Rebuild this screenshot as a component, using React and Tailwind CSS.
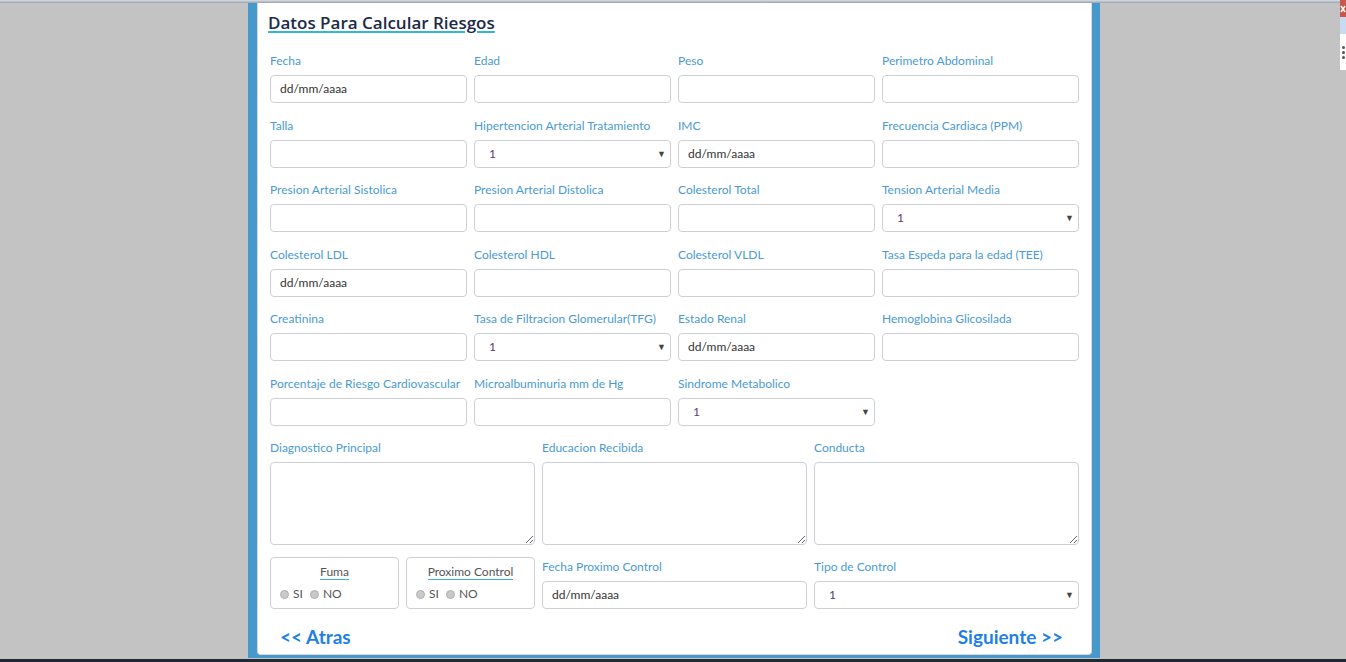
import React from 'react';

const font = { fontFamily: '"Lato", "Liberation Sans", sans-serif' };

// filas del formulario de riesgos
const rows = [
  [
    { label: 'Fecha', type: 'date' },
    { label: 'Edad' },
    { label: 'Peso' },
    { label: 'Perimetro Abdominal' },
  ],
  [
    { label: 'Talla' },
    { label: 'Hipertencion Arterial Tratamiento', type: 'select' },
    { label: 'IMC', type: 'date' },
    { label: 'Frecuencia Cardiaca (PPM)' },
  ],
  [
    { label: 'Presion Arterial Sistolica' },
    { label: 'Presion Arterial Distolica' },
    { label: 'Colesterol Total' },
    { label: 'Tension Arterial Media', type: 'select' },
  ],
  [
    { label: 'Colesterol LDL', type: 'date' },
    { label: 'Colesterol HDL' },
    { label: 'Colesterol VLDL' },
    { label: 'Tasa Espeda para la edad (TEE)' },
  ],
  [
    { label: 'Creatinina' },
    { label: 'Tasa de Filtracion Glomerular(TFG)', type: 'select' },
    { label: 'Estado Renal', type: 'date' },
    { label: 'Hemoglobina Glicosilada' },
  ],
  [
    { label: 'Porcentaje de Riesgo Cardiovascular' },
    { label: 'Microalbuminuria mm de Hg' },
    { label: 'Sindrome Metabolico', type: 'select' },
    null,
  ],
];

function Box({ type }) {
  if (type === 'select') {
    return (
      <div className="h-[28px] border border-[#ccd0d4] rounded-[4px] bg-white flex items-center justify-between pl-[14px] pr-[4px]">
        <span className="text-[12px] text-[#5a3d7a]">1</span>
        <span className="text-[9px] text-[#444]">▼</span>
      </div>
    );
  }
  return (
    <div className="h-[28px] border border-[#ccd0d4] rounded-[4px] bg-white flex items-center pl-[9px]">
      {type === 'date' && <span className="text-[12px] text-[#333]">dd/mm/aaaa</span>}
    </div>
  );
}

function Field({ f }) {
  if (!f) return <div />;
  return (
    <div className="flex flex-col">
      <label className="text-[12px] leading-[15px] h-[15px] mb-[7px] text-[#4a9ad4] whitespace-nowrap">{f.label}</label>
      <Box type={f.type} />
    </div>
  );
}

function Radio({ text }) {
  return (
    <span className="flex items-center gap-[4px] text-[12px] text-[#555]">
      <span className="w-[9px] h-[9px] rounded-full bg-[#c9c9c9] border border-[#b0b0b0]" />
      {text}
    </span>
  );
}

function ChoiceBox({ title }) {
  return (
    <div className="h-[52px] border border-[#ccd0d4] rounded-[4px] flex flex-col items-center pt-[6px]">
      <span className="text-[12px] leading-[15px] text-[#555] border-b border-[#3bb3cf]">{title}</span>
      <div className="self-start flex gap-[7px] pl-[9px] mt-[5px]">
        <Radio text="SI" />
        <Radio text="NO" />
      </div>
    </div>
  );
}

export default function App() {
  return (
    <div className="relative w-full h-[662px] bg-[#c3c3c3] overflow-hidden flex flex-col" style={font}>
      <div className="h-[3px] bg-gradient-to-b from-[#d8dee6] to-[#9aa3ad]" />
      <div className="flex-1 flex">
        <div className="w-[248px]" />
        <div className="w-[852px] h-[655px] bg-[#4799cb] pl-[9px] pr-[8px] pb-[3px]">
          <div className="h-full bg-white border border-[#d5d9dd] border-t-0 rounded-b-[4px] px-[12px] pt-[7px]">
            <h1
              className="text-[17px] leading-[26px] font-semibold text-[#1b2a4a] underline decoration-[#35b6d6] decoration-[1.5px] underline-offset-[2px] -ml-[2px]"
              style={{ fontFamily: '"Open Sans", "Liberation Sans", sans-serif' }}
            >
              Datos Para Calcular Riesgos
            </h1>
            <div className="mt-[17px] grid grid-cols-4 gap-x-[7px] gap-y-[14.5px]">
              {rows.map((r, i) => r.map((f, j) => <Field key={i + '-' + j} f={f} />))}
            </div>
            <div className="mt-[14.5px] grid grid-cols-3 gap-x-[7px]">
              {['Diagnostico Principal', 'Educacion Recibida', 'Conducta'].map(t => (
                <div key={t} className="flex flex-col">
                  <label className="text-[12px] leading-[15px] h-[15px] mb-[7px] text-[#4a9ad4]">{t}</label>
                  <textarea className="h-[83px] border border-[#ccd0d4] rounded-[4px] bg-white outline-none" />
                </div>
              ))}
            </div>
            <div className="mt-[12px] grid grid-cols-3 gap-x-[7px] items-end">
              <div className="grid grid-cols-2 gap-x-[7px]">
                <ChoiceBox title="Fuma" />
                <ChoiceBox title="Proximo Control" />
              </div>
              <Field f={{ label: 'Fecha Proximo Control', type: 'date' }} />
              <Field f={{ label: 'Tipo de Control', type: 'select' }} />
            </div>
            <div className="flex justify-between pl-[10px] pr-[16px] mt-[15px]">
              <span className="text-[19px] leading-[26px] font-bold text-[#1f7fe8]">&lt;&lt; Atras</span>
              <span className="text-[19px] leading-[26px] font-bold text-[#1f7fe8]">Siguiente &gt;&gt;</span>
            </div>
          </div>
        </div>
      </div>
      <div className="h-[1px] bg-[#c3c3c3]" />
      <div className="h-[3px] bg-[#1e2a36]" />
      <div className="absolute top-0 right-0 w-[6px] h-[70px] flex flex-col">
        <div className="h-[17px] bg-[#c9564a] flex items-center">
          <svg width="6" height="8" viewBox="0 0 6 8"><path d="M1 1l4 6M5 1L1 7" stroke="#fff" strokeWidth="1.5" /></svg>
        </div>
        <div className="h-[17px] bg-[#c7dcf0]" />
        <div className="flex-1 bg-white flex flex-col gap-[2px] pt-[12px] pl-[2px]">
          <span className="w-[3px] h-[3px] rounded-full bg-[#555]" />
          <span className="w-[3px] h-[3px] rounded-full bg-[#555]" />
          <span className="w-[3px] h-[3px] rounded-full bg-[#555]" />
        </div>
      </div>
    </div>
  );
}
